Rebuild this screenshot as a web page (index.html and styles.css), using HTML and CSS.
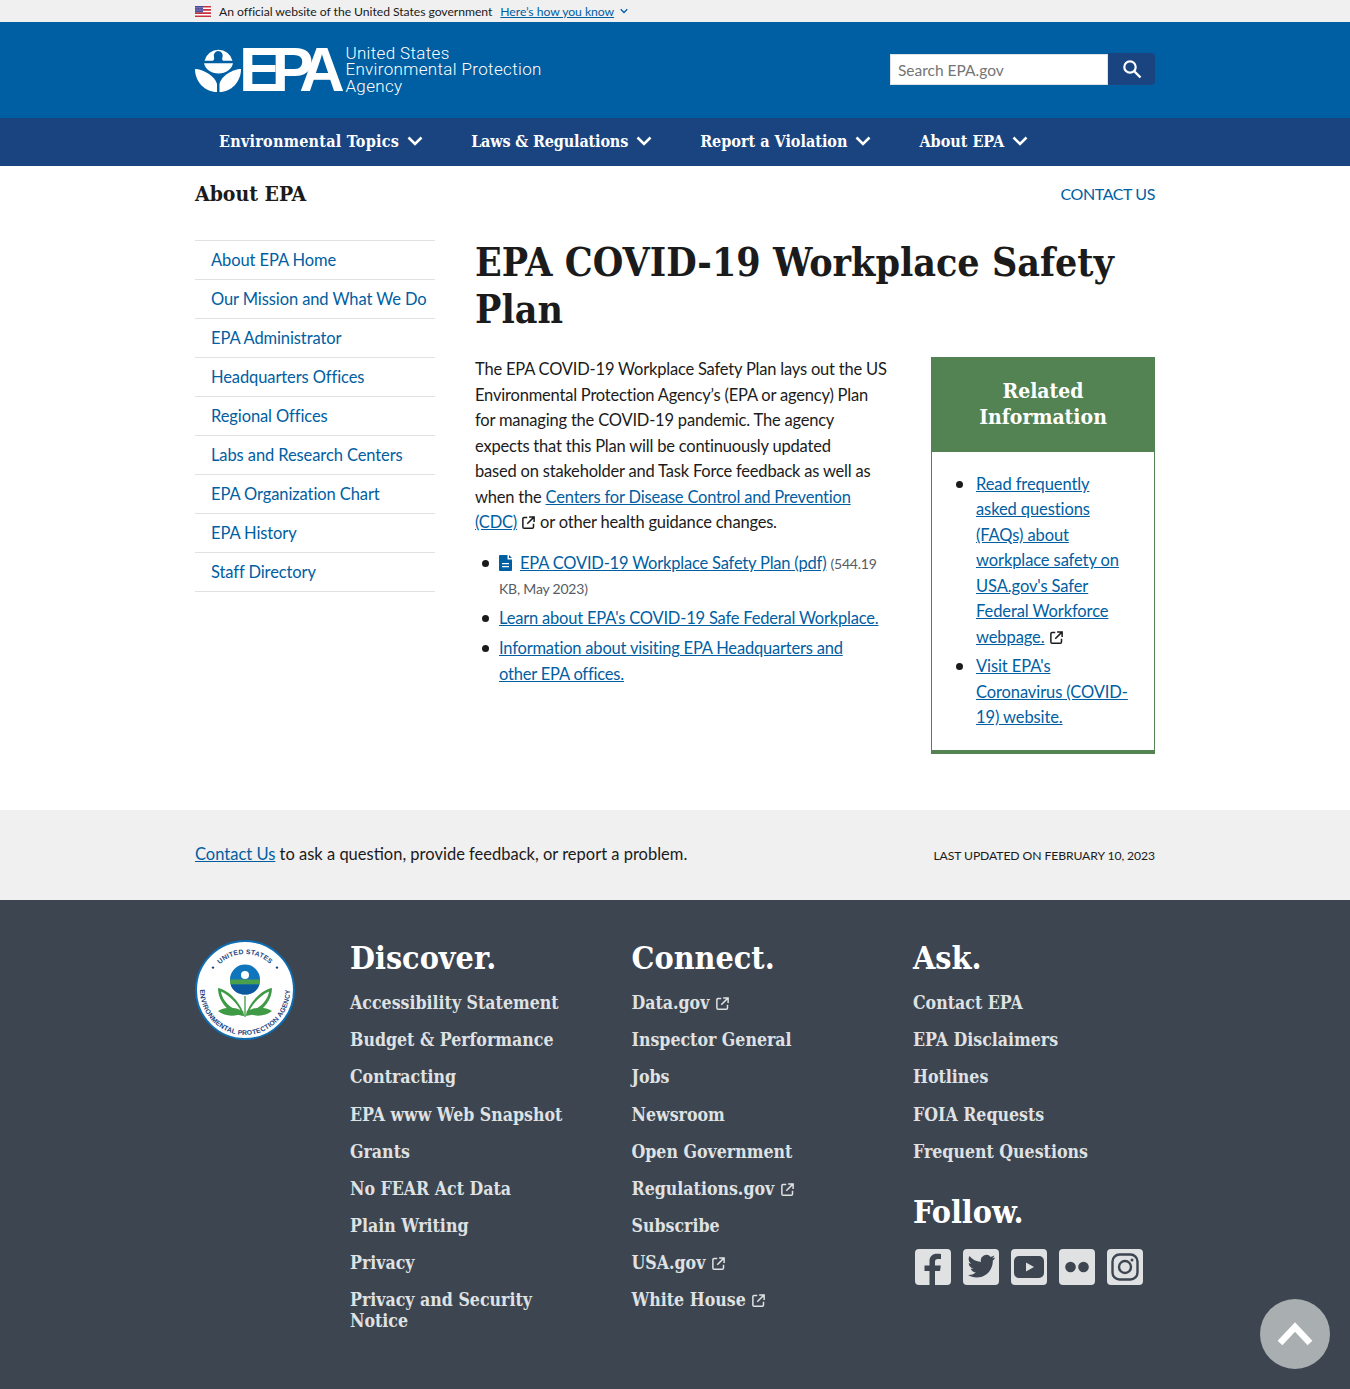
FILE: index.html
```html
<!DOCTYPE html>
<html lang="en">
<head>
  <meta charset="UTF-8" />
  <title>EPA COVID-19 Workplace Safety Plan</title>
  <link rel="stylesheet" href="styles.css">
</head>
<body>
  <svg class="sprite" width="0" height="0">
    <symbol id="ext" viewBox="0 0 24 24">
      <path fill="none" stroke="currentColor" stroke-width="2.4" d="M10 4H5a2 2 0 0 0-2 2v13a2 2 0 0 0 2 2h13a2 2 0 0 0 2-2v-5M13 3h8v8M21 3L10 14"/>
    </symbol>
    <symbol id="chev" viewBox="0 0 16 10">
      <path fill="none" stroke="currentColor" stroke-width="2.6" d="M1.5 1.5L8 8l6.5-6.5"/>
    </symbol>
  </svg>

  <div class="gov-banner">
    <div class="wrap gov-inner">
      <svg class="flag" viewBox="0 0 16 11" width="16" height="11">
        <rect width="16" height="11" fill="#fff"/>
        <path fill="#c8313e" d="M0 0h16v1.6H0zM0 3.1h16v1.6H0zM0 6.3h16v1.6H0zM0 9.4h16V11H0z"/>
        <rect width="8" height="6.3" fill="#3b3b8f"/>
        <path stroke="#fff" stroke-width=".7" stroke-dasharray="1 1" d="M.5 1.3h7M.5 3.1h7M.5 4.9h7"/>
      </svg>
      <span class="gov-text">An official website of the United States government</span>
      <a class="gov-link" href="#">Here’s how you know</a>
      <svg class="gov-chev"><use href="#chev"/></svg>
    </div>
  </div>

  <header class="site-header">
    <div class="wrap header-inner">
      <a class="logo" href="#">
        <svg class="logo-mark" viewBox="0 0 46 46" width="46" height="46">
          <path fill="#fff" d="M9.500 14.700A14.500 14.700 0 0 1 37.500 14.700H28C27 14 27 13 27.500 11A4.500 4.500 0 1 0 19 11C19.500 13 19 14 18 14.700Z"/>
          <path fill="#fff" d="M9 17.300H38C37 23 31 27.500 23.500 27.500C16 27.500 10 23 9 17.300Z"/>
          <path fill="#fff" d="M0 23C8 23 20 30 22 38V46C10 46 0 36 0 23Z"/>
          <path fill="#fff" d="M46 23C38 23 26 30 24.500 38V46C36 46 46 36 46 23Z"/>
        </svg>
        <span class="logo-epa">EPA</span>
        <span class="logo-name">United States<br>Environmental Protection<br>Agency</span>
      </a>
      <form class="search">
        <input class="search-input" type="text" placeholder="Search EPA.gov">
        <button class="search-btn" type="button" aria-label="Search">
          <svg viewBox="0 0 24 24" width="24" height="24"><circle cx="10" cy="10" r="5.700" fill="none" stroke="#fff" stroke-width="2.200"/><path stroke="#fff" stroke-width="2.400" d="M14 14l6.500 6.500"/></svg>
        </button>
      </form>
    </div>
  </header>

  <nav class="main-nav">
    <div class="wrap nav-inner">
      <a class="nav-item nav-wide" href="#">Environmental Topics <svg class="nav-chev"><use href="#chev"/></svg></a>
      <a class="nav-item nav-tight" href="#">Laws &amp; Regulations <svg class="nav-chev"><use href="#chev"/></svg></a>
      <a class="nav-item" href="#">Report a Violation <svg class="nav-chev"><use href="#chev"/></svg></a>
      <a class="nav-item" href="#">About EPA <svg class="nav-chev"><use href="#chev"/></svg></a>
    </div>
  </nav>

  <div class="wrap section-row">
    <div class="section-title">About EPA</div>
    <a class="section-contact" href="#">CONTACT US</a>
  </div>

  <div class="wrap page">
    <ul class="side-nav">
      <li><a href="#">About EPA Home</a></li>
      <li><a href="#">Our Mission and What We Do</a></li>
      <li><a href="#">EPA Administrator</a></li>
      <li><a href="#">Headquarters Offices</a></li>
      <li><a href="#">Regional Offices</a></li>
      <li><a href="#">Labs and Research Centers</a></li>
      <li><a href="#">EPA Organization Chart</a></li>
      <li><a href="#">EPA History</a></li>
      <li><a href="#">Staff Directory</a></li>
    </ul>

    <main class="content">
      <h1>EPA COVID-19 Workplace Safety Plan</h1>
      <div class="content-cols">
        <div class="article">
          <p>The EPA COVID-19 Workplace Safety Plan lays out the US Environmental Protection Agency’s (EPA or agency) Plan for managing the COVID-19 pandemic. The agency expects that this Plan will be continuously updated<br>based on stakeholder and Task Force feedback as well as when the <a href="#">Centers for Disease Control and Prevention (CDC)</a> <svg class="ext"><use href="#ext"/></svg> or other health guidance changes.</p>
          <ul class="article-list">
            <li>
              <svg class="doc" viewBox="0 0 14 16" width="14" height="16"><path fill="#005ea2" fill-rule="evenodd" d="M1 0h7.500v4.500H13V15a1 1 0 0 1-1 1H1a1 1 0 0 1-1-1V1a1 1 0 0 1 1-1zm9 0l3 3h-3zM3 8v1.300h7V8zm0 3v1.300h7V11z"/></svg>
              <a href="#">EPA COVID-19 Workplace Safety Plan (pdf)</a> <span class="file-meta">(544.19 KB, May 2023)</span>
            </li>
            <li><a href="#">Learn about EPA's COVID-19 Safe Federal Workplace.</a></li>
            <li><a href="#">Information about visiting EPA Headquarters and<br>other EPA offices.</a></li>
          </ul>
        </div>
        <aside class="related">
          <h2>Related Information</h2>
          <ul>
            <li><a href="#">Read frequently asked questions (FAQs) about workplace safety on USA.gov's Safer Federal Workforce webpage.</a> <svg class="ext"><use href="#ext"/></svg></li>
            <li><a href="#">Visit EPA's Coronavirus (COVID-19) website.</a></li>
          </ul>
        </aside>
      </div>
    </main>
  </div>

  <div class="contact-bar">
    <div class="wrap contact-inner">
      <div class="contact-text"><a href="#">Contact Us</a> to ask a question, provide feedback, or report a problem.</div>
      <div class="updated">LAST UPDATED ON FEBRUARY 10, 2023</div>
    </div>
  </div>

  <footer class="site-footer">
    <div class="wrap footer-inner">
      <svg class="seal" viewBox="0 0 100 100" width="100" height="100">
        <defs>
          <path id="arcTop" d="M14 50A36 36 0 0 1 86 50"/>
          <path id="arcBot" d="M8.900 31.700A45 45 0 1 0 91.100 31.700"/>
        </defs>
        <circle cx="50" cy="50" r="49" fill="#fff" stroke="#0f6cb0" stroke-width="2"/>
        <text class="seal-text"><textPath href="#arcTop" startOffset="50%" text-anchor="middle">UNITED STATES</textPath></text>
        <text class="seal-text"><textPath href="#arcBot" startOffset="50%" text-anchor="middle">ENVIRONMENTAL PROTECTION AGENCY</textPath></text>
        <circle cx="18" cy="27.600" r="1.200" fill="#1a4480"/>
        <circle cx="82" cy="27.600" r="1.200" fill="#1a4480"/>
        <circle cx="50" cy="39.600" r="15" fill="#0f75bc"/>
        <path fill="#4aa04a" d="M35 39.500h30l-.3 5H35.300z"/>
        <path fill="#0b5aa0" d="M35.600 44.500h28.800C63 50.500 57 54.600 50 54.600s-13-4.100-14.400-10.100z"/>
        <circle cx="50" cy="35" r="4" fill="#fff"/>
        <path fill="#3f9a45" d="M49.500 76C46 63 34 50 23 48c0 14 12 27 26.500 28zM50.500 76C54 63 66 50 77 48c0 14-12 27-26.500 28z"/>
        <path fill="#fff" d="M46.500 72C42 63 34 55 26 51.500c1 9 10 18 20.500 20.500zM53.500 72C58 63 66 55 74 51.500c-1 9-10 18-20.500 20.500z"/>
        <path fill="#3f9a45" d="M23 71c8-5 19-4 26 1-7 5-19 5-26-1zM77 71c-8-5-19-4-26 1 7 5 19 5 26-1z"/>
        <path stroke="#3f9a45" stroke-width="1.300" d="M50 56v21"/>
      </svg>

      <div class="footer-col">
        <h3>Discover.</h3>
        <a href="#">Accessibility Statement</a>
        <a href="#">Budget &amp; Performance</a>
        <a href="#">Contracting</a>
        <a href="#">EPA www Web Snapshot</a>
        <a href="#">Grants</a>
        <a href="#">No FEAR Act Data</a>
        <a href="#">Plain Writing</a>
        <a href="#">Privacy</a>
        <a href="#">Privacy and Security Notice</a>
      </div>

      <div class="footer-col">
        <h3>Connect.</h3>
        <a href="#">Data.gov <svg class="ext"><use href="#ext"/></svg></a>
        <a href="#">Inspector General</a>
        <a href="#">Jobs</a>
        <a href="#">Newsroom</a>
        <a href="#">Open Government</a>
        <a href="#">Regulations.gov <svg class="ext"><use href="#ext"/></svg></a>
        <a href="#">Subscribe</a>
        <a href="#">USA.gov <svg class="ext"><use href="#ext"/></svg></a>
        <a href="#">White House <svg class="ext"><use href="#ext"/></svg></a>
      </div>

      <div class="footer-col footer-last">
        <h3>Ask.</h3>
        <a href="#">Contact EPA</a>
        <a href="#">EPA Disclaimers</a>
        <a href="#">Hotlines</a>
        <a href="#">FOIA Requests</a>
        <a href="#">Frequent Questions</a>
        <h3 class="follow">Follow.</h3>
        <div class="social">
          <svg viewBox="0 0 36 36" width="36" height="36"><rect width="36" height="36" rx="4" fill="#dfe1e2"/><path fill="#3d4551" d="M20 36V22h5l.8-5.500H20V13c0-1.700.7-3 3-3h3V5c-1-.2-2.500-.3-4-.3-4.500 0-7.500 2.600-7.500 7.500v4.300H9.500V22h5v14z"/></svg>
          <svg viewBox="0 0 36 36" width="36" height="36"><rect width="36" height="36" rx="4" fill="#dfe1e2"/><path fill="#3d4551" d="M32 8.500c-1 .5-2 .8-3.200 1 1.200-.7 2-1.800 2.500-3-1.100.6-2.300 1.100-3.600 1.400A5.600 5.600 0 0 0 18 13c-4.700-.2-8.800-2.500-11.600-5.900-1.500 2.600-.7 5.900 1.800 7.600-.9 0-1.800-.3-2.500-.7 0 2.700 1.900 5 4.500 5.500-.8.200-1.700.3-2.500.1.700 2.200 2.800 3.900 5.200 3.900A11.300 11.300 0 0 1 5 26c2.500 1.600 5.500 2.500 8.700 2.500 10.500 0 16.500-8.900 16.100-16.900 1.100-.8 1.800-1.700 2.200-3.100z"/></svg>
          <svg viewBox="0 0 36 36" width="36" height="36"><rect width="36" height="36" rx="4" fill="#dfe1e2"/><rect x="3" y="7" width="30" height="22" rx="5" fill="#3d4551"/><path fill="#dfe1e2" d="M15 13.500l8 4.500-8 4.500z"/></svg>
          <svg viewBox="0 0 36 36" width="36" height="36"><rect width="36" height="36" rx="4" fill="#dfe1e2"/><circle cx="11.500" cy="18" r="5.300" fill="#3d4551"/><circle cx="24.500" cy="18" r="5.300" fill="#3d4551"/></svg>
          <svg viewBox="0 0 36 36" width="36" height="36"><rect width="36" height="36" rx="4" fill="#dfe1e2"/><rect x="5.500" y="5.500" width="25" height="25" rx="7" fill="none" stroke="#3d4551" stroke-width="2.400"/><circle cx="18" cy="18" r="6" fill="none" stroke="#3d4551" stroke-width="2.400"/><circle cx="25" cy="11" r="1.500" fill="#3d4551"/></svg>
        </div>
      </div>
    </div>
  </footer>

  <a class="back-top" href="#" aria-label="Back to top">
    <svg viewBox="0 0 36 24" width="36" height="24"><path fill="none" stroke="#fff" stroke-width="6.500" d="M3 21L18 5l15 16"/></svg>
  </a>
</body>
</html>
```

FILE: styles.css
```css
body {
  margin: 0;
  font-family: Lato, "Liberation Sans", sans-serif;
  font-size: 16.500px;
  letter-spacing: -.1px;
  color: #1b1b1b;
  background: #fff;
}

a {
  color: #005ea2;
}

.sprite {
  position: absolute;
}

.wrap {
  width: 960px;
  margin: 0 auto;
}

/* gov banner */
.gov-banner {
  background: #f0f0f0;
  height: 22px;
}

.gov-inner {
  display: flex;
  align-items: center;
  height: 22px;
  font-size: 12.200px;
  letter-spacing: -.05px;
}

.flag {
  margin-right: 8px;
}

.gov-link {
  margin-left: 8px;
}

.gov-chev {
  width: 8px;
  height: 6px;
  margin-left: 6px;
  color: #005ea2;
}

/* header */
.site-header {
  background: #005ea2;
  height: 96px;
}

.header-inner {
  display: flex;
  align-items: center;
  justify-content: space-between;
  height: 94px;
}

.logo {
  display: flex;
  align-items: center;
  color: #fff;
  text-decoration: none;
}

.logo-mark {
  margin-right: -2px;
}

.logo-epa {
  font-family: "Liberation Sans", sans-serif;
  font-weight: 700;
  font-size: 63px;
  letter-spacing: -9.500px;
  line-height: 46px;
  margin-right: 10px;
}

.logo-name {
  font-family: Roboto, sans-serif;
  font-weight: 300;
  font-size: 17px;
  line-height: 16.500px;
  letter-spacing: .35px;
  padding-top: 1px;
}

.search {
  display: flex;
  height: 32px;
}

.search-input {
  width: 218px;
  height: 31px;
  margin-top: 1px;
  box-sizing: border-box;
  border: 1px solid #dfe1e2;
  padding: 0 7px;
  font-family: Lato, sans-serif;
  font-size: 15.500px;
  color: #71767a;
}

.search-btn {
  width: 47px;
  height: 32px;
  border: none;
  background: #1a4480;
  border-radius: 0 4px 4px 0;
  padding: 0;
  display: flex;
  align-items: center;
  justify-content: center;
}

/* main nav */
.main-nav {
  background: #1a4480;
  height: 48px;
}

.nav-inner {
  display: flex;
  height: 46px;
  align-items: center;
  gap: 48px;
  padding-left: 24px;
  box-sizing: border-box;
}

.nav-item {
  display: flex;
  align-items: center;
  gap: 8px;
  font-family: "DejaVu Serif", serif;
  font-stretch: condensed;
  font-weight: 700;
  font-size: 16px;
  letter-spacing: 0;
  color: #fff;
  text-decoration: none;
}

.nav-wide {
  letter-spacing: .25px;
}

.nav-tight {
  letter-spacing: -.15px;
}

.nav-chev {
  width: 16px;
  height: 10px;
  color: #fff;
}

/* section heading row */
.section-row {
  display: flex;
  justify-content: space-between;
  align-items: center;
  padding-top: 12px;
  height: 30px;
  margin-bottom: 32px;
}

.section-title {
  font-family: "DejaVu Serif", serif;
  font-stretch: condensed;
  font-weight: 700;
  font-size: 21px;
  letter-spacing: 0;
}

.section-contact {
  text-decoration: none;
  font-size: 16px;
  letter-spacing: -.4px;
}

/* page */
.page {
  display: flex;
  gap: 40px;
}

.side-nav {
  width: 240px;
  flex-shrink: 0;
  list-style: none;
  margin: 0;
  padding: 0;
  border-top: 1px solid #dfe1e2;
  align-self: flex-start;
}

.side-nav li {
  height: 38px;
  border-bottom: 1px solid #dfe1e2;
}

.side-nav a {
  display: block;
  padding-left: 16px;
  line-height: 38px;
  text-decoration: none;
}

.content {
  width: 680px;
}

h1 {
  font-family: "DejaVu Serif", serif;
  font-stretch: condensed;
  font-weight: 700;
  font-size: 39px;
  line-height: 47px;
  letter-spacing: 0;
  margin: -1px 0 24px;
  color: #1b1b1b;
}

.content-cols {
  display: flex;
  justify-content: space-between;
}

.article {
  width: 414px;
  line-height: 25.500px;
  letter-spacing: -.2px;
}

.article p {
  margin: 0 0 15px;
}

.ext {
  width: 15px;
  height: 15px;
  vertical-align: -2px;
}

.article-list {
  list-style: none;
  margin: 0;
  padding-left: 24px;
}

.article-list li,
.related li {
  position: relative;
}

.article-list li::before,
.related li::before {
  content: "";
  position: absolute;
  left: -17px;
  top: 9px;
  width: 7px;
  height: 7px;
  border-radius: 50%;
  background: #1b1b1b;
}

.related li::before {
  left: -20px;
}

.article-list li {
  margin-bottom: 4.500px;
}

.doc {
  vertical-align: -2px;
  margin-right: 3px;
}

.file-meta {
  font-size: 14px;
  color: #565c65;
}

.related {
  width: 224px;
  height: 397px;
  box-sizing: border-box;
  border: 1px solid #538253;
  border-bottom-width: 4px;
  line-height: 25.500px;
}

.related h2 {
  margin: 0;
  background: #538253;
  color: #fff;
  font-family: "DejaVu Serif", serif;
  font-stretch: condensed;
  font-weight: 700;
  font-size: 21px;
  line-height: 26px;
  letter-spacing: 0;
  text-align: center;
  padding: 20px 16px 22px;
}

.related ul {
  list-style: none;
  margin: 19.500px 0 0;
  padding: 0 26px 0 44px;
}

.related li {
  margin-bottom: 4px;
}

/* contact bar */
.contact-bar {
  margin-top: 56px;
  background: #f0f0f0;
  height: 90px;
}

.contact-inner {
  display: flex;
  align-items: center;
  justify-content: space-between;
  height: 88px;
}

.contact-text {
  letter-spacing: 0;
}

.updated {
  font-size: 12.200px;
  padding-top: 2px;
}

/* footer */
.site-footer {
  background: #3d4551;
  height: 489px;
}

.footer-inner {
  display: flex;
  padding-top: 40px;
}

.seal {
  flex-shrink: 0;
  margin-right: 55px;
}

.seal-text {
  font-family: "Liberation Sans", sans-serif;
  font-size: 6.800px;
  font-weight: 700;
  fill: #1a4480;
  letter-spacing: .2px;
}

.footer-col {
  width: 230px;
  margin-right: 51.500px;
}

.footer-last {
  margin-right: 0;
}

.footer-col h3 {
  margin: 0 0 16px;
  font-family: "DejaVu Serif", serif;
  font-stretch: condensed;
  font-weight: 700;
  font-size: 32px;
  line-height: 36px;
  letter-spacing: 0;
  color: #fff;
}

.footer-col a {
  display: block;
  margin-bottom: 16.180px;
  font-family: "DejaVu Serif", serif;
  font-stretch: condensed;
  font-weight: 700;
  font-size: 17.600px;
  line-height: 21px;
  letter-spacing: 0;
  color: #dfe1e2;
  text-decoration: none;
}

.footer-col .follow {
  margin-top: 32px;
  margin-bottom: 19px;
}

.social {
  display: flex;
  gap: 12px;
  padding-left: 2px;
}

.back-top {
  position: absolute;
  left: 1260px;
  top: 1299px;
  width: 70px;
  height: 70px;
  border-radius: 50%;
  background: #a9aeb1;
  display: flex;
  align-items: center;
  justify-content: center;
}
```
